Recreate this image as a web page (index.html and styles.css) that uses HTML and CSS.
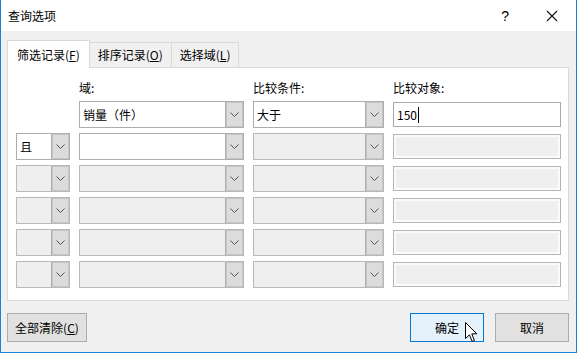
FILE: index.html
```html
<!DOCTYPE html>
<html lang="zh-CN">
<head>
  <meta charset="UTF-8" />
  <title>查询选项</title>
  <link rel="stylesheet" href="styles.css">
</head>
<body>
  <div class="dialog">
    <div class="titlebar">
      <span class="title">查询选项</span>
      <span class="help">?</span>
      <svg class="close" width="12" height="12" viewBox="0 0 12 12"><path d="M1 1 L11 11 M11 1 L1 11" stroke="#111" stroke-width="1.1" fill="none"/></svg>
    </div>

    <div class="content">
      <div class="tabs">
        <div class="tab active">筛选记录(<u>F</u>)</div>
        <div class="tab">排序记录(<u>O</u>)</div>
        <div class="tab">选择域(<u>L</u>)</div>
      </div>

      <div class="panel">
        <div class="grid">
          <!-- header labels -->
          <span></span>
          <span class="label">域:</span>
          <span class="label">比较条件:</span>
          <span class="label">比较对象:</span>

          <!-- first criterion -->
          <span></span>
          <div class="combo"><span class="val">销量（件）</span><span class="arrow"><svg width="9" height="5" viewBox="0 0 9 5"><path d="M0.5 0.5 L4.5 4.5 L8.5 0.5" stroke="#555" fill="none"/></svg></span></div>
          <div class="combo"><span class="val">大于</span><span class="arrow"><svg width="9" height="5" viewBox="0 0 9 5"><path d="M0.5 0.5 L4.5 4.5 L8.5 0.5" stroke="#555" fill="none"/></svg></span></div>
          <div class="edit"><span class="val">150</span><span class="caret"></span></div>

          <!-- second criterion -->
          <div class="combo"><span class="val">且</span><span class="arrow"><svg width="9" height="5" viewBox="0 0 9 5"><path d="M0.5 0.5 L4.5 4.5 L8.5 0.5" stroke="#555" fill="none"/></svg></span></div>
          <div class="combo"><span class="val"></span><span class="arrow"><svg width="9" height="5" viewBox="0 0 9 5"><path d="M0.5 0.5 L4.5 4.5 L8.5 0.5" stroke="#555" fill="none"/></svg></span></div>
          <div class="combo off"><span class="val"></span><span class="arrow"><svg width="9" height="5" viewBox="0 0 9 5"><path d="M0.5 0.5 L4.5 4.5 L8.5 0.5" stroke="#555" fill="none"/></svg></span></div>
          <div class="edit off"></div>

          <!-- disabled rows -->
          <div class="combo off"><span class="val"></span><span class="arrow"><svg width="9" height="5" viewBox="0 0 9 5"><path d="M0.5 0.5 L4.5 4.5 L8.5 0.5" stroke="#555" fill="none"/></svg></span></div>
          <div class="combo off"><span class="val"></span><span class="arrow"><svg width="9" height="5" viewBox="0 0 9 5"><path d="M0.5 0.5 L4.5 4.5 L8.5 0.5" stroke="#555" fill="none"/></svg></span></div>
          <div class="combo off"><span class="val"></span><span class="arrow"><svg width="9" height="5" viewBox="0 0 9 5"><path d="M0.5 0.5 L4.5 4.5 L8.5 0.5" stroke="#555" fill="none"/></svg></span></div>
          <div class="edit off"></div>

          <div class="combo off"><span class="val"></span><span class="arrow"><svg width="9" height="5" viewBox="0 0 9 5"><path d="M0.5 0.5 L4.5 4.5 L8.5 0.5" stroke="#555" fill="none"/></svg></span></div>
          <div class="combo off"><span class="val"></span><span class="arrow"><svg width="9" height="5" viewBox="0 0 9 5"><path d="M0.5 0.5 L4.5 4.5 L8.5 0.5" stroke="#555" fill="none"/></svg></span></div>
          <div class="combo off"><span class="val"></span><span class="arrow"><svg width="9" height="5" viewBox="0 0 9 5"><path d="M0.5 0.5 L4.5 4.5 L8.5 0.5" stroke="#555" fill="none"/></svg></span></div>
          <div class="edit off"></div>

          <div class="combo off"><span class="val"></span><span class="arrow"><svg width="9" height="5" viewBox="0 0 9 5"><path d="M0.5 0.5 L4.5 4.5 L8.5 0.5" stroke="#555" fill="none"/></svg></span></div>
          <div class="combo off"><span class="val"></span><span class="arrow"><svg width="9" height="5" viewBox="0 0 9 5"><path d="M0.5 0.5 L4.5 4.5 L8.5 0.5" stroke="#555" fill="none"/></svg></span></div>
          <div class="combo off"><span class="val"></span><span class="arrow"><svg width="9" height="5" viewBox="0 0 9 5"><path d="M0.5 0.5 L4.5 4.5 L8.5 0.5" stroke="#555" fill="none"/></svg></span></div>
          <div class="edit off"></div>

          <div class="combo off"><span class="val"></span><span class="arrow"><svg width="9" height="5" viewBox="0 0 9 5"><path d="M0.5 0.5 L4.5 4.5 L8.5 0.5" stroke="#555" fill="none"/></svg></span></div>
          <div class="combo off"><span class="val"></span><span class="arrow"><svg width="9" height="5" viewBox="0 0 9 5"><path d="M0.5 0.5 L4.5 4.5 L8.5 0.5" stroke="#555" fill="none"/></svg></span></div>
          <div class="combo off"><span class="val"></span><span class="arrow"><svg width="9" height="5" viewBox="0 0 9 5"><path d="M0.5 0.5 L4.5 4.5 L8.5 0.5" stroke="#555" fill="none"/></svg></span></div>
          <div class="edit off"></div>
        </div>
      </div>

      <div class="footer">
        <button class="btn clear">全部清除(<u>C</u>)</button>
        <button class="btn ok">确定</button>
        <button class="btn">取消</button>
      </div>
    </div>

    <!-- mouse pointer over the OK button -->
    <svg class="pointer" width="13" height="21" viewBox="0 0 13 21"><path d="M0.5 0.5 L0.5 16.5 L4.5 12.8 L7.2 19.5 L9.4 18.5 L6.8 11.8 L11.8 11.8 Z" fill="#fff" stroke="#000" stroke-width="1" stroke-linejoin="miter"/></svg>
  </div>
</body>
</html>
```

FILE: styles.css
```css
* { box-sizing: border-box; margin: 0; padding: 0 }
html, body {
  width: 100%; height: 100%;
  background: #f0f0f0;
  font-family: "Noto Sans CJK SC", "Noto Sans", sans-serif;
  font-size: 12px;
  color: #000;
  overflow: hidden;
}

/*–––– Window frame ––––*/
.dialog {
  position: relative;
  width: 577px; height: 353px;
  display: flex; flex-direction: column;
  border: 1px solid #1883d7;
  border-top: none;
  background: #f0f0f0;
}
.titlebar {
  height: 31px;
  display: flex; align-items: center;
  padding-left: 7px;
  background: #fff;
}
.title { flex: 1; }
.help { font-size: 14px; margin-right: 37px; font-family: "Liberation Sans", sans-serif; }
.close { margin-right: 18px; }

/*–––– Body ––––*/
.content {
  flex: 1;
  padding: 9px 7px 0 6px;
}

/*–––– Tabs ––––*/
.tabs {
  display: flex; align-items: flex-end;
  height: 27px;
}
.tab {
  height: 25px;
  padding: 3px 8px 0 8px;
  border: 1px solid #d9d9d9;
  border-bottom: none;
  border-left: none;
  background: #f0f0f0;
  line-height: 18px;
}
.tab.active {
  position: relative; z-index: 1;
  height: 28px;
  margin-bottom: -1px;
  padding: 5px 9px 0 9px;
  border-left: 1px solid #d9d9d9;
  background: #fff;
}
u { text-decoration-thickness: 1px; text-underline-offset: 1px; }

/*–––– Panel ––––*/
.panel {
  height: 234px;
  border: 1px solid #d9d9d9;
  background: #fff;
  padding: 12px 0 0 8px;
}
.grid {
  display: grid;
  grid-template-columns: 54px 165px 131px 168px;
  grid-template-rows: 16px repeat(6, 27px);
  column-gap: 9px;
  row-gap: 5px;
}
.label { line-height: 16px; }

/*–––– Combos ––––*/
.combo {
  display: flex;
  height: 27px;
  border: 1px solid #adadad;
  background: #fff;
}
.combo .val {
  flex: 1;
  padding-left: 3px;
  line-height: 25px;
  white-space: nowrap;
}
.combo .arrow {
  width: 18px;
  display: flex; align-items: center; justify-content: center;
  background: #dcdcdc;
  border-left: 1px solid #adadad;
  box-shadow: inset 1px 1px 0 #c6c6c6, inset -1px -1px 0 #c6c6c6;
}
.combo.off { background: #efefef; border-color: #b9b9b9; }

/*–––– Text boxes ––––*/
.edit {
  display: flex; align-items: center;
  height: 25px;
  margin-top: 1px;
  padding-left: 3px;
  border: 1px solid #a9a9a9;
  background: #fff;
}
.edit .val { line-height: 16px; }
.caret { width: 1px; height: 16px; background: #000; margin-left: 1px; }
.edit.off {
  border-color: #b4b4b4;
  background: #efefef;
  box-shadow: inset 0 0 0 2px #fbfbfb;
}

/*–––– Buttons ––––*/
.footer {
  display: flex; align-items: center;
  gap: 11px;
  margin-top: 12px;
}
.btn {
  width: 74px; height: 29px;
  font: inherit;
  color: #000;
  background: #e1e1e1;
  border: 1px solid #adadad;
}
.btn.clear { width: 80px; margin-right: auto; }
.btn.ok {
  background: #e5f1fb;
  border-color: #0078d7;
}

/*–––– Pointer ––––*/
.pointer {
  position: absolute;
  left: 464px; top: 322px;
}
```
